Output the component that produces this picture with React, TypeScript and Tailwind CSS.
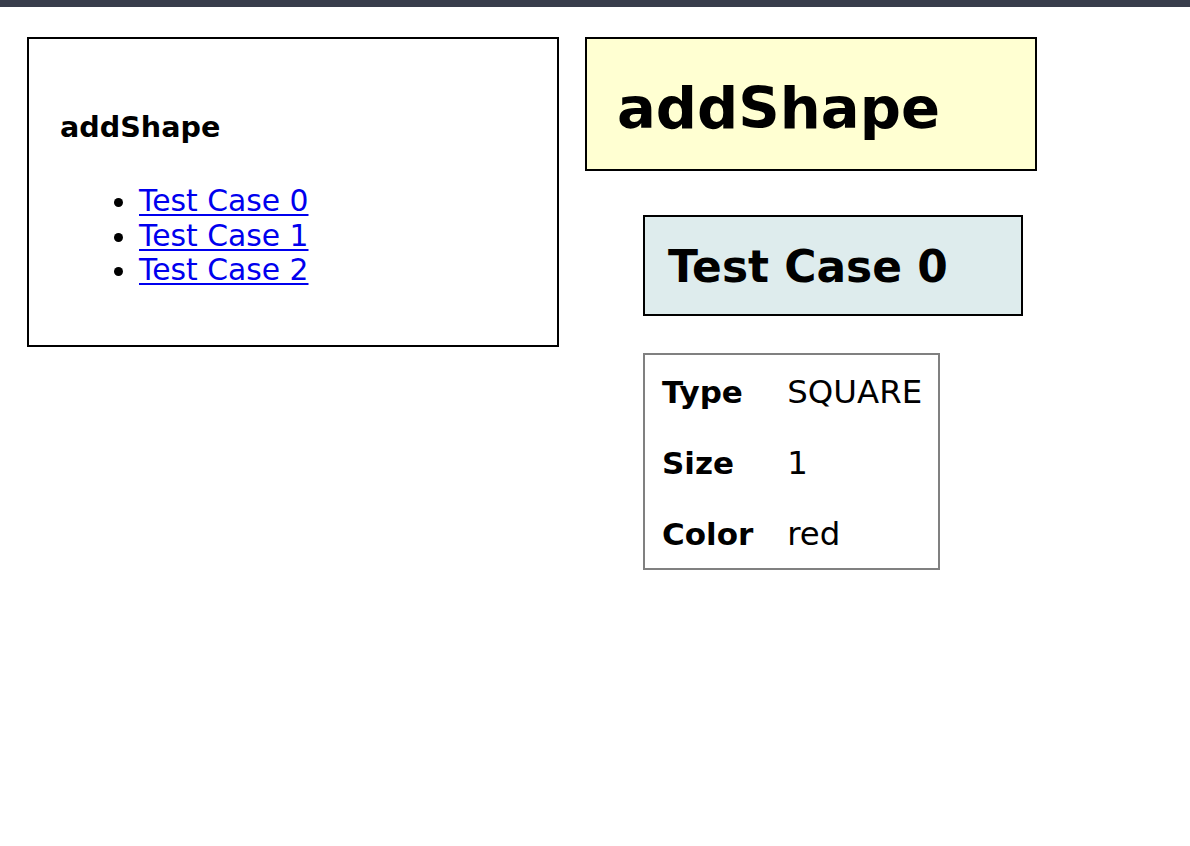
import React from 'react';

const cases = ["Test Case 0", "Test Case 1", "Test Case 2"];

const props = [
  { label: "Type", value: "SQUARE" },
  { label: "Size", value: "1" },
  { label: "Color", value: "red" },
];

export default function App() {
  return (
    <div className="min-h-[846px] bg-white text-black font-['DejaVu_Sans',Verdana,sans-serif]">
      {/* top strip */}
      <div className="h-[7px] bg-[#383d4b]" />

      <div className="flex items-start pt-[30px] pl-[27px] gap-[26px]">
        {/* Test list */}
        <div className="w-[532px] h-[310px] border-2 border-black pt-[72px] pl-[31px]">
          <h4 className="text-[28.6px] font-bold leading-[32px]">addShape</h4>
          <ul className="list-disc pl-[79px] mt-[41px] text-[29.8px] leading-[34.5px]">
            {cases.map((c) => (
              <li key={c}>
                <a href="#" className="text-[#0000ee] underline underline-offset-[3px]">
                  {c}
                </a>
              </li>
            ))}
          </ul>
        </div>

        {/* Detail */}
        <div className="flex flex-col">
          <div className="w-[452px] h-[134px] border-2 border-black bg-[#ffffd2] pl-[30px] pt-[36px]">
            <h1 className="text-[57.6px] font-bold leading-[67px]">addShape</h1>
          </div>

          <div className="ml-[58px] mt-[44px] w-[380px] h-[101px] border-2 border-black bg-[#deeced] pl-[23px] pt-[25px]">
            <h2 className="text-[43.9px] font-bold leading-[50px]">Test Case 0</h2>
          </div>

          <div className="ml-[58px] mt-[37px] w-[297px] h-[217px] border-2 border-[#808080] pt-[1.5px] px-[1px]">
            <table className="border-separate border-spacing-0">
              <tbody>
                {props.map((p) => (
                  <tr key={p.label} className="h-[71px]">
                    <th className="text-left text-[31px] font-bold pl-[16px] pr-[18px]">{p.label}</th>
                    <td className="px-[16px] text-[32.4px] font-normal">{p.value}</td>
                  </tr>
                ))}
              </tbody>
            </table>
          </div>
        </div>
      </div>
    </div>
  );
}
